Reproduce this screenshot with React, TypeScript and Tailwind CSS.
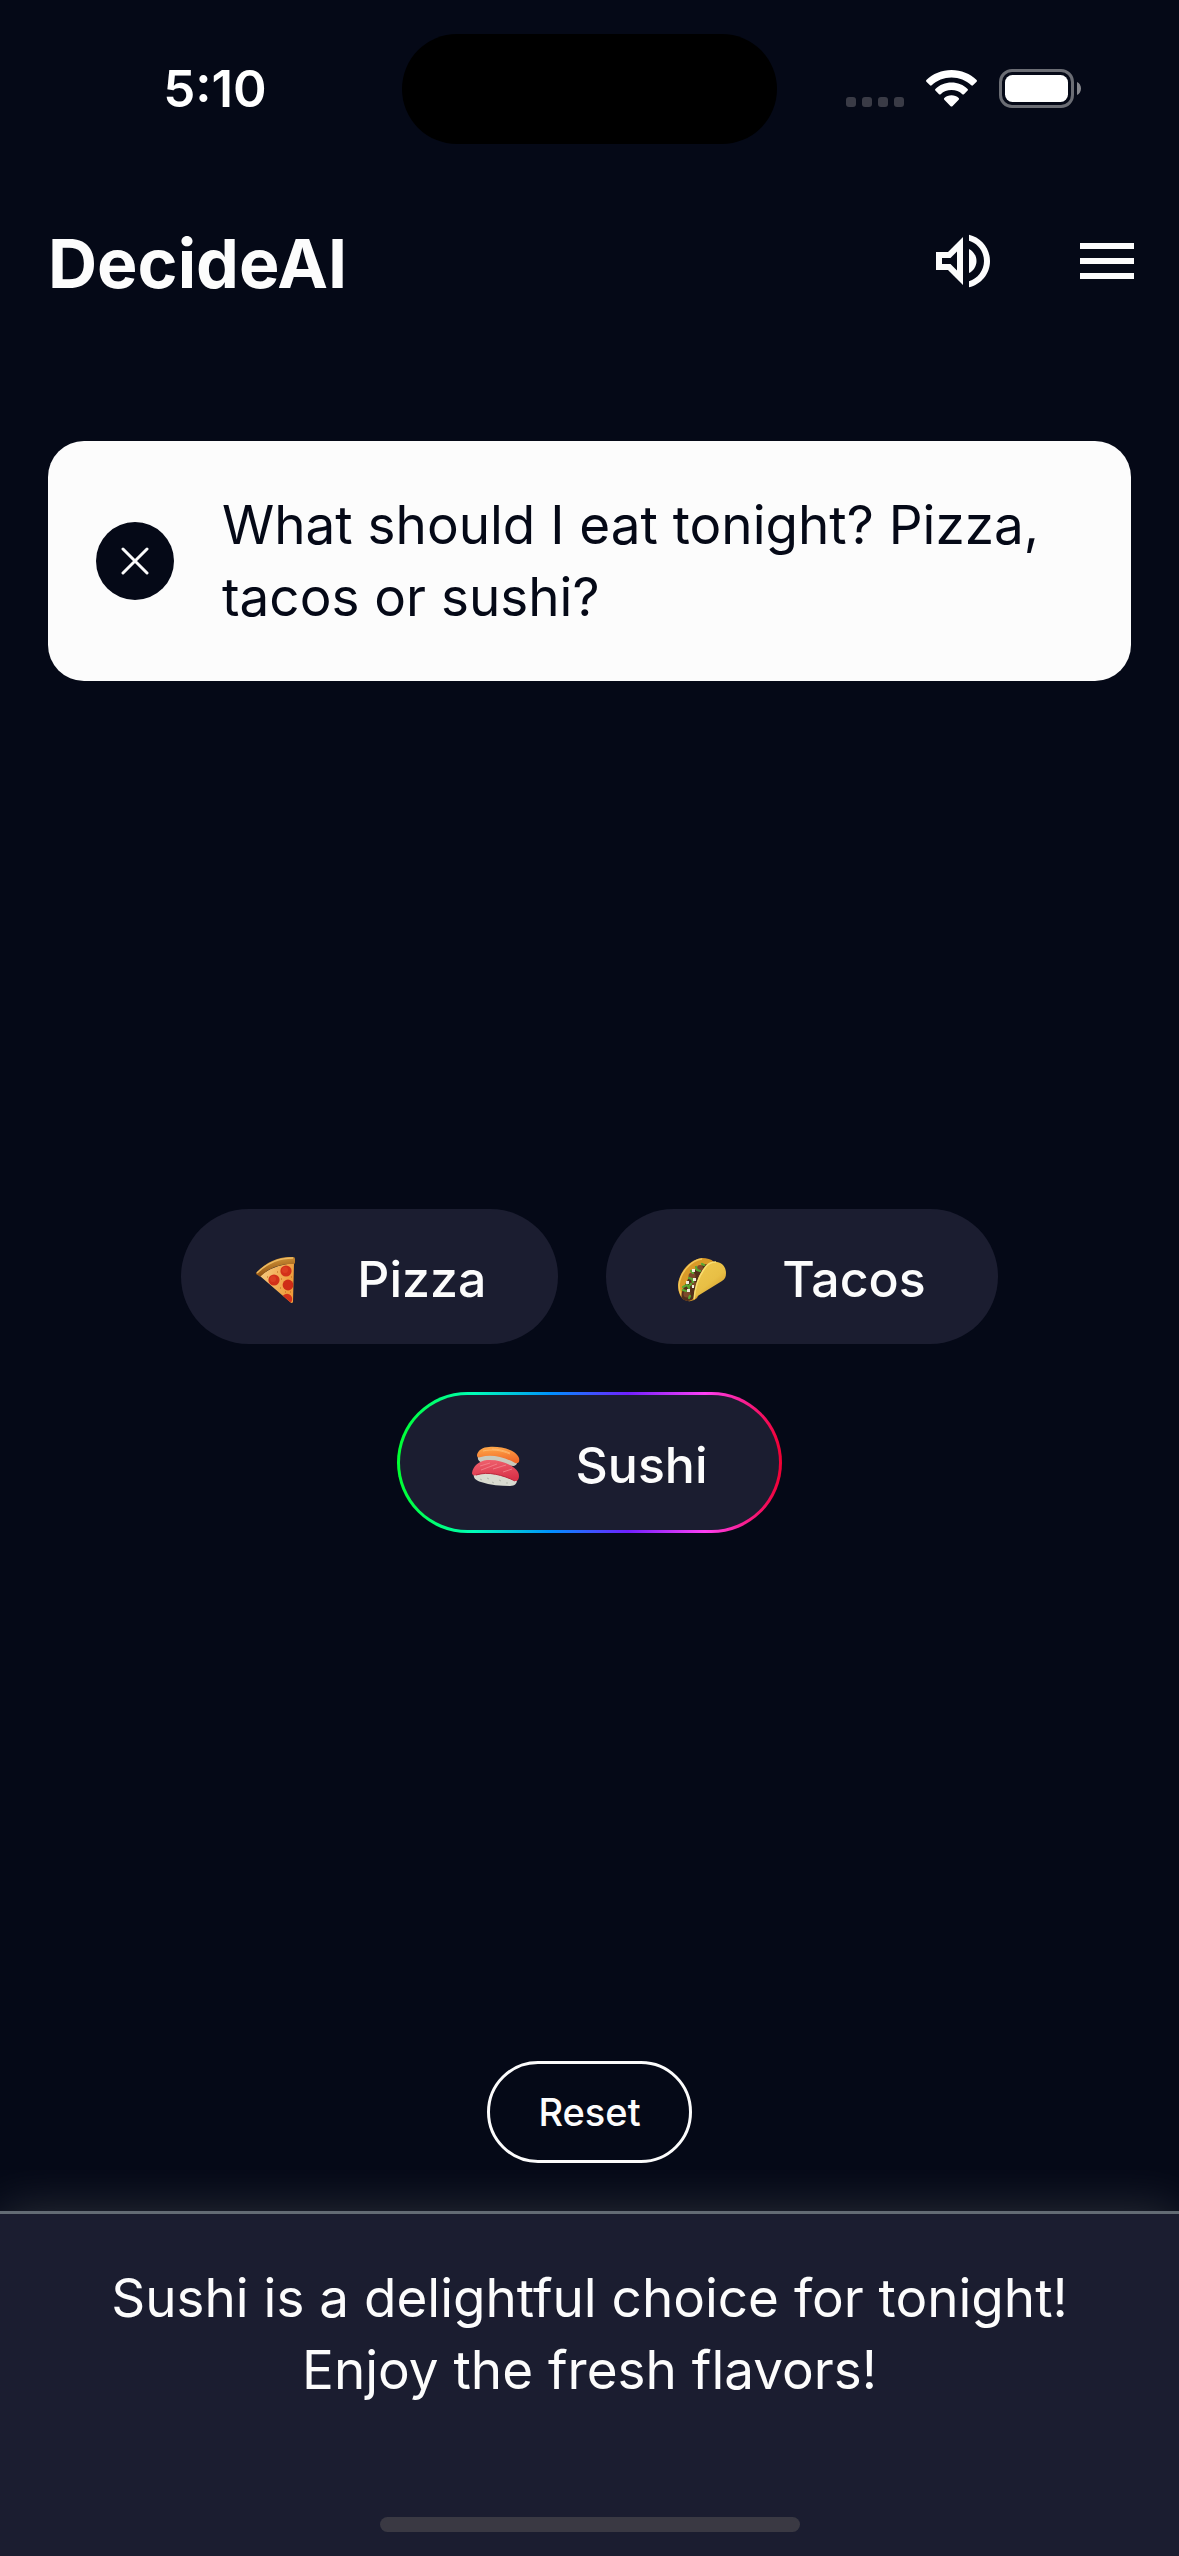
import React, { useState } from "react";

function WifiIcon() {
  return (
    <svg viewBox="0 0 51 37" className="h-[37px] w-[51px]" fill="#fff" aria-hidden="true">
      <path d="M25.500 0C35.300 0 44.200 3.800 50.600 10c.500.500.500 1.200 0 1.700l-3.600 3.600c-.500.500-1.200.500-1.700 0C40.100 10.400 33.100 7.500 25.500 7.500S10.900 10.400 5.700 15.300c-.500.500-1.200.500-1.700 0L.4 11.700c-.500-.500-.500-1.200 0-1.700C6.800 3.800 15.700 0 25.500 0z" />
      <path d="M25.500 12.600c6.200 0 11.900 2.400 16.100 6.300.500.500.500 1.200 0 1.700L38 24.200c-.500.500-1.200.500-1.700 0-2.800-2.600-6.600-4.100-10.800-4.100s-8 1.500-10.800 4.100c-.500.500-1.200.500-1.700 0l-3.600-3.600c-.500-.500-.500-1.200 0-1.700 4.200-3.900 9.900-6.300 16.100-6.300z" />
      <path d="M25.500 25.300c2.800 0 5.300 1 7.200 2.700.500.500.500 1.200 0 1.700l-6.300 6.500c-.500.500-1.300.500-1.800 0l-6.300-6.500c-.500-.500-.500-1.200 0-1.700 1.900-1.700 4.400-2.700 7.200-2.700z" />
    </svg>
  );
}

function BatteryIcon() {
  return (
    <svg viewBox="0 0 82 39" className="h-[39px] w-[82px]" aria-hidden="true">
      <rect x="1.500" y="1.500" width="72" height="36" rx="11.500" fill="none" stroke="#6b6d74" strokeWidth="3" />
      <rect x="6" y="6" width="63" height="27" rx="7.500" fill="#fff" />
      <path d="M78 13c2.500 1.200 4 3.500 4 6.500s-1.500 5.300-4 6.500z" fill="#85868c" />
    </svg>
  );
}

function VolumeIcon() {
  return (
    <svg viewBox="0 0 24 24" className="size-[72px]" fill="currentColor" aria-hidden="true">
      <path d="M3 9v6h4l5 5V4L7 9H3zm7-.17v6.34L7.83 13H5v-2h2.83L10 8.830zM16.500 12c0-1.770-1.020-3.290-2.500-4.030v8.050c1.480-.73 2.500-2.250 2.500-4.020zM14 3.230v2.060c2.890.86 5 3.540 5 6.710s-2.110 5.850-5 6.710v2.060c4.010-.91 7-4.490 7-8.770s-2.990-7.860-7-8.770z" />
    </svg>
  );
}

function MenuIcon() {
  return (
    <svg viewBox="0 0 24 24" className="size-[72px]" fill="currentColor" aria-hidden="true">
      <path d="M3 18h18v-2H3v2zm0-5h18v-2H3v2zm0-7v2h18V6H3z" />
    </svg>
  );
}

function PizzaIcon() {
  return (
    <svg viewBox="0 0 48 48" className="size-12" aria-hidden="true">
      <defs>
        <linearGradient id="crust" x1="0" y1="0" x2="0.300" y2="1">
          <stop offset="0" stopColor="#e0a544" />
          <stop offset="1" stopColor="#8d4c0d" />
        </linearGradient>
        <linearGradient id="cheese" x1="0" y1="0" x2="1" y2="0.300">
          <stop offset="0" stopColor="#f6cd83" />
          <stop offset="1" stopColor="#ef9c3a" />
        </linearGradient>
        <clipPath id="slice">
          <path d="M7 20Q20 9 41 8L40 46Q39 47 37 46z" />
        </clipPath>
      </defs>
      <path d="M7 20Q20 9 41 7L40 46Q39 48 37 46z" fill="url(#cheese)" />
      <g clipPath="url(#slice)">
        <circle cx="33" cy="15" r="5.600" fill="#d3311a" />
        <circle cx="21" cy="24" r="5.600" fill="#d3311a" />
        <circle cx="35" cy="29" r="5.400" fill="#cf2d17" />
        <circle cx="34" cy="43" r="5.200" fill="#d3311a" />
        <circle cx="32" cy="14" r="3" fill="#e24a28" opacity="0.600" />
        <circle cx="20" cy="23" r="3" fill="#e24a28" opacity="0.600" />
        <path d="M24 16h1M28 23h1M27 32h1M38 21h1M14 21h1M32 36h1M37 36h1" stroke="#b9651c" />
      </g>
      <path d="M3 17C13 6 26 0 40 1q2 0 2 2v4q0 1-2 1C27 8 16 12 8 20q-1 1-2 0l-3-2z" fill="url(#crust)" />
      <path d="M4 17C14 7 26 2 40 2" fill="none" stroke="#edbb62" strokeWidth="1.500" />
    </svg>
  );
}

function TacoIcon() {
  return (
    <svg viewBox="0 0 48 48" className="size-12" aria-hidden="true">
      <defs>
        <linearGradient id="shell" x1="0" y1="0" x2="0.700" y2="1">
          <stop offset="0" stopColor="#efc94f" />
          <stop offset="0.600" stopColor="#e8bf45" />
          <stop offset="1" stopColor="#cf9526" />
        </linearGradient>
      </defs>
      <path d="M10 45C3 44 0 37 0 29 1 16 12 3 24 2c5 0 9 1 12 4L19 42q-4 4-9 3z" fill="#d99a28" />
      <path d="M10 44C4 42 1 36 1 29 2 17 13 4 24 3" fill="none" stroke="#f2c75a" strokeWidth="1.500" />
      <path d="M30 8c-7 0-15 6-20 15-4 8-8 15-6 19 3 4 9 4 13-1z" fill="#53301b" />
      <g fill="#7d4a2b">
        <circle cx="22" cy="12" r="3" />
        <circle cx="14" cy="20" r="3.500" />
        <circle cx="9" cy="38" r="3.500" />
        <circle cx="15" cy="28" r="3" />
      </g>
      <g fill="none" stroke="#58a833" strokeWidth="2.200" strokeLinecap="round" strokeLinejoin="round">
        <path d="M24 8l2 1M18 11l1 3 3 1M13 15l2 2M11 22l3 1 1 3M5 31l4-2 2 3M13 28l-2 2M5 34l3 1M11 42l1-2" />
      </g>
      <g fill="#f3eedf">
        <rect x="14" y="13" width="3" height="3" />
        <rect x="8" y="25" width="3" height="3" />
        <rect x="9" y="33" width="3" height="3" />
        <rect x="15" y="22" width="3" height="3" />
        <rect x="14" y="29" width="2" height="3" />
      </g>
      <path d="M16 44C16 34 19 21 26 12c4-6 9-7 13-6 6 1 9 6 9 11 0 4-1 6-4 8L18 41z" fill="url(#shell)" />
      <path d="M16 43C17 33 20 21 27 12c3-5 7-6 11-6" fill="none" stroke="#f8dd72" strokeWidth="1.500" />
    </svg>
  );
}

function SushiIcon() {
  return (
    <svg viewBox="0 0 48 48" className="size-12" aria-hidden="true">
      <defs>
        <linearGradient id="salmon" x1="0" y1="0" x2="0.200" y2="1">
          <stop offset="0" stopColor="#ffab4a" />
          <stop offset="1" stopColor="#f26a2a" />
        </linearGradient>
        <linearGradient id="tuna" x1="0" y1="0" x2="0.200" y2="1">
          <stop offset="0" stopColor="#f0636f" />
          <stop offset="1" stopColor="#d93249" />
        </linearGradient>
      </defs>
      <path d="M6 13C5 18 7 20 11 21l31 3q4-1 3-6L20 11z" fill="#c9cabd" />
      <path d="M5 13C6 8 11 5 17 5c12-1 27 3 30 11 1 4-1 6-4 5C33 15 19 12 9 15c-3 1-4 0-4-2z" fill="url(#salmon)" />
      <path d="M11 9c8-2 18-1 27 3M20 7c7 0 13 2 18 4" fill="none" stroke="#ffc27a" strokeWidth="1" opacity="0.700" />
      <path d="M2 31C1 36 3 38 9 40c9 3 20 4 29 4 5 0 7-3 7-6L20 29z" fill="#d9dbd0" />
      <path d="M0 31C1 24 7 19 15 18c13-1 27 5 31 12 2 4 1 10-3 9C31 33 16 29 5 33c-3 1-5 0-5-2z" fill="url(#tuna)" />
      <path d="M8 24l10-3M9 28l16-6M21 27l13-4M31 30l9-3" fill="none" stroke="#f78d95" strokeWidth="1" opacity="0.700" />
      <path d="M4 33c12-4 27 0 39 6" fill="none" stroke="#bb2a3f" strokeWidth="1" />
      <path d="M8 37l2 1M15 36l2 1M20 40l2 1M27 38l2 1M34 41l2 0" stroke="#b4b7ab" />
    </svg>
  );
}

const options = [
  { name: "Pizza", Icon: PizzaIcon },
  { name: "Tacos", Icon: TacoIcon },
  { name: "Sushi", Icon: SushiIcon },
];

function StatusBar() {
  return (
    <div className="grid h-[177px] grid-cols-[1fr_375px_1fr] items-center">
      <div className="pl-7 text-center text-[51px] leading-[60px] font-semibold text-white">5:10</div>
      <div className="h-[110px] rounded-full bg-black" />
      <div className="flex items-center justify-end gap-[22px] pr-[98px]">
        <div className="flex gap-[6px] self-end pb-px">
          <span className="size-[10px] rounded-[3px] bg-[#3a3b46]" />
          <span className="size-[10px] rounded-[3px] bg-[#3a3b46]" />
          <span className="size-[10px] rounded-[3px] bg-[#3a3b46]" />
          <span className="size-[10px] rounded-[3px] bg-[#3a3b46]" />
        </div>
        <WifiIcon />
        <BatteryIcon />
      </div>
    </div>
  );
}

export default function App() {
  const [question, setQuestion] = useState("What should I eat tonight? Pizza, tacos or sushi?");
  const picked = "Sushi";

  return (
    <div className="flex min-h-screen flex-col bg-[#050917] font-['Inter',sans-serif] text-[#fcfcfc]">
      <StatusBar />

      <header className="flex h-[168px] items-center justify-between pr-9 pl-12">
        <h1 className="pt-1 text-[68px] leading-[84px] font-bold">DecideAI</h1>
        <div className="flex gap-[72px]">
          <button type="button" aria-label="Sound">
            <VolumeIcon />
          </button>
          <button type="button" aria-label="Menu">
            <MenuIcon />
          </button>
        </div>
      </header>

      <section className="mx-12 mt-24 flex items-center gap-12 rounded-[36px] bg-[#fcfcfc] p-12">
        <button
          type="button"
          aria-label="Clear question"
          onClick={() => setQuestion("")}
          className="flex size-[78px] shrink-0 items-center justify-center rounded-full bg-[#050917]"
        >
          <svg viewBox="0 0 28 28" className="size-7" fill="none" stroke="#fcfcfc" strokeWidth="3" strokeLinecap="round" aria-hidden="true">
            <path d="M2 2l24 24M26 2L2 26" />
          </svg>
        </button>
        <textarea
          aria-label="Question"
          rows={2}
          value={question}
          onChange={(e) => setQuestion(e.target.value)}
          className="block min-w-0 flex-1 resize-none overflow-hidden text-[53px] leading-[72px] text-[#050917] outline-none"
        />
      </section>

      <main className="flex flex-1 flex-wrap content-center items-center justify-center gap-12 px-12">
        {options.map(({ name, Icon }) =>
          name === picked ? (
            <button
              key={name}
              type="button"
              aria-pressed="true"
              className="rounded-full bg-[linear-gradient(90deg,#00ff30_0%,#00ffb8_20%,#0090ff_40%,#7020ff_60%,#ff40f4_80%,#f00032_100%)] p-[3px]"
            >
              <span className="flex h-[135px] items-center gap-14 rounded-full bg-[#1b1d30] px-[72px] pt-1.5 text-[50px] font-medium">
                <Icon />
                {name}
              </span>
            </button>
          ) : (
            <button
              key={name}
              type="button"
              aria-pressed="false"
              className="flex h-[135px] items-center gap-14 rounded-full bg-[#1b1d30] px-[72px] pt-1.5 text-[50px] font-medium"
            >
              <Icon />
              {name}
            </button>
          ),
        )}
      </main>

      <div className="flex justify-center pb-12">
        <button type="button" className="h-[102px] rounded-full border-3 border-[#fcfcfc] px-12 text-[38px] font-medium">
          Reset
        </button>
      </div>

      <footer className="flex flex-col items-center border-t-3 border-[#636b74] bg-[#1b1d30] px-24 pt-12 pb-6 shadow-[0_0_48px_rgba(252,252,240,0.16)]">
        <p className="text-center text-[53px] leading-[72px]">
          Sushi is a delightful choice for tonight! Enjoy the fresh flavors!
        </p>
        <div className="mt-[111px] h-[15px] w-[420px] rounded-full bg-[#3a3943]" />
      </footer>
    </div>
  );
}
